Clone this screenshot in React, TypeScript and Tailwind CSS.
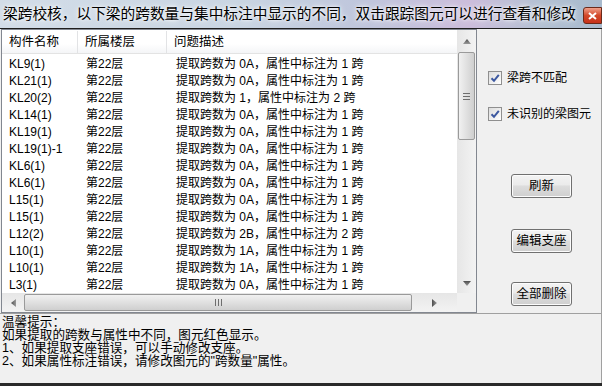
import React from "react";

const rows = [
  ["KL9(1)", "0A", "1"],
  ["KL21(1)", "0A", "1"],
  ["KL20(2)", "1", "2"],
  ["KL14(1)", "0A", "1"],
  ["KL19(1)", "0A", "1"],
  ["KL19(1)-1", "0A", "1"],
  ["KL6(1)", "0A", "1"],
  ["KL6(1)", "0A", "1"],
  ["L15(1)", "0A", "1"],
  ["L15(1)", "0A", "1"],
  ["L12(2)", "2B", "2"],
  ["L10(1)", "1A", "1"],
  ["L10(1)", "1A", "1"],
  ["L3(1)", "0A", "1"],
];

const Arrow = ({ dir }: { dir: "up" | "down" | "left" | "right" }) => {
  const pts = {
    up: "0,5 4,0 8,5",
    down: "0,0 8,0 4,5",
    left: "5,0 5,8 0,4",
    right: "0,0 0,8 5,4",
  }[dir];
  const horiz = dir === "left" || dir === "right";
  return (
    <svg width={horiz ? 5 : 8} height={horiz ? 8 : 5} viewBox={horiz ? "0 0 5 8" : "0 0 8 5"}>
      <defs>
        <linearGradient id={`g-${dir}`} x1="0" y1="0" x2={horiz ? "1" : "0"} y2={horiz ? "0" : "1"}>
          <stop offset="0" stopColor="#4d4d4d" />
          <stop offset="1" stopColor="#9a9a9a" />
        </linearGradient>
      </defs>
      <polygon points={pts} fill={`url(#g-${dir})`} />
    </svg>
  );
};

const Check = () => (
  <div className="flex h-[14px] w-[14px] items-center justify-center border border-[#8f8f8f] bg-[linear-gradient(135deg,#dcdcdc,#ffffff)]">
    <svg width="10" height="10" viewBox="0 0 10 10">
      <path d="M1.5 5.2 L4 7.8 L8.8 1.8" fill="none" stroke="#3c58a0" strokeWidth="2" />
    </svg>
  </div>
);

const Btn = ({ label }: { label: string }) => (
  <button className="flex h-[24px] w-[61px] items-center justify-center rounded-[3px] border border-[#707070] bg-[linear-gradient(#f3f3f3_0%,#ebebeb_45%,#dddddd_50%,#cfcfcf_100%)] text-[12.5px] leading-none text-black shadow-[inset_0_0_0_1px_#fcfcfc]">
    {label}
  </button>
);

export default function App() {
  return (
    <div
      className="flex h-[386px] w-[602px] flex-col overflow-hidden bg-[#f0f0f0] text-black"
      style={{ fontFamily: '"Liberation Sans", "Noto Sans CJK SC", sans-serif' }}
    >
      {/* Title bar */}
      <div className="flex h-[28px] items-start justify-between bg-[linear-gradient(90deg,#d3dde8_0%,#c9d5e2_40%,#bfc6dc_60%,#ccbddb_78%,#b3c1d3_90%,#a8bacd_100%)]">
        <span className="pl-[3px] pt-[4px] text-[14.7px] leading-[20px] [text-shadow:0_0_6px_#ffffff,0_0_3px_#ffffff]">
          梁跨校核，以下梁的跨数量与集中标注中显示的不同，双击跟踪图元可以进行查看和修改
        </span>
        <div className="mt-[7px] flex h-[17px] w-[19px] items-center justify-center rounded-l-[3px] border border-[#6b2a1a] bg-[linear-gradient(#f0a08a,#d2482a_50%,#c7321a)]">
          <svg width="9" height="8" viewBox="0 0 9 8">
            <path d="M1 1 L8 7 M8 1 L1 7" stroke="#ffffff" strokeWidth="2" />
          </svg>
        </div>
      </div>
      <div className="h-px bg-[#1e1e1e]" />

      {/* Main */}
      <div className="flex h-[284px]">
        {/* List view */}
        <div className="ml-[1px] flex w-[476px] flex-col border border-[#828790] bg-white">
          <div className="flex flex-1 overflow-hidden">
            <div className="flex-1 overflow-hidden">
              {/* header */}
              <div className="flex h-[24px] items-center border-b border-[#e3e3e3] bg-[linear-gradient(#ffffff_0%,#ffffff_60%,#f4f5f7_100%)] text-[12.5px]">
                <div className="w-[76px] border-r border-[#e2e3e5] pl-[7px] leading-[22px]">构件名称</div>
                <div className="w-[89px] border-r border-[#e2e3e5] pl-[7px] leading-[22px]">所属楼层</div>
                <div className="flex-1 pl-[7px] leading-[22px]">问题描述</div>
              </div>
              <div className="pt-[2px]">
                {rows.map(([name, a, b], i) => (
                  <div key={i} className="flex h-[17px] items-center text-[12px] leading-[17px]">
                    <div className="w-[77px] pl-[7px]">{name}</div>
                    <div className="w-[89px] pl-[7px]">第22层</div>
                    <div className="flex-1 whitespace-nowrap pl-[8px]">
                      提取跨数为 {a}，属性中标注为 {b} 跨
                    </div>
                  </div>
                ))}
              </div>
            </div>
            {/* vertical scrollbar */}
            <div className="flex w-[19px] flex-col bg-[linear-gradient(90deg,#e6e6e6,#f3f3f3)]">
              <div className="flex h-[22px] items-center justify-center">
                <Arrow dir="up" />
              </div>
              <div className="mx-[1px] flex h-[88px] items-center justify-center rounded-[2px] border border-[#9a9a9a] bg-[linear-gradient(90deg,#f1f1f1,#e0e0e0_50%,#cfcfcf)]">
                <div className="flex flex-col gap-[2px]">
                  <div className="h-px w-[7px] bg-[#6e6e6e]" />
                  <div className="h-px w-[7px] bg-[#6e6e6e]" />
                  <div className="h-px w-[7px] bg-[#6e6e6e]" />
                </div>
              </div>
              <div className="flex-1" />
              <div className="flex h-[20px] items-center justify-center">
                <Arrow dir="down" />
              </div>
            </div>
          </div>
          {/* horizontal scrollbar */}
          <div className="flex h-[19px]">
            <div className="flex flex-1 items-center bg-[linear-gradient(#e6e6e6,#f3f3f3)]">
              <div className="flex w-[22px] justify-center">
                <Arrow dir="left" />
              </div>
              <div className="my-[1px] flex h-[17px] w-[388px] items-center justify-center rounded-[2px] border border-[#9a9a9a] bg-[linear-gradient(#f1f1f1,#e0e0e0_50%,#cfcfcf)]">
                <div className="flex gap-[2px]">
                  <div className="h-[7px] w-px bg-[#6e6e6e]" />
                  <div className="h-[7px] w-px bg-[#6e6e6e]" />
                  <div className="h-[7px] w-px bg-[#6e6e6e]" />
                </div>
              </div>
              <div className="flex flex-1 justify-center">
                <Arrow dir="right" />
              </div>
            </div>
            <div className="w-[19px] bg-[#f0f0f0]" />
          </div>
        </div>

        {/* Right panel */}
        <div className="flex flex-1 flex-col border-r border-[#a0a0a0] pl-[11px] pt-[42px]">
          <div className="flex items-center gap-[5px] text-[12px] leading-[14px]">
            <Check />
            <span>梁跨不匹配</span>
          </div>
          <div className="mt-[22px] flex items-center gap-[5px] text-[12px] leading-[14px]">
            <Check />
            <span>未识别的梁图元</span>
          </div>
          <div className="ml-[23px] mt-[53px] flex flex-col">
            <Btn label="刷新" />
            <div className="h-[31px]" />
            <Btn label="编辑支座" />
            <div className="h-[29px]" />
            <Btn label="全部删除" />
          </div>
        </div>
      </div>
      <div className="h-px bg-[#a0a0a0]" />

      {/* Tips */}
      <div className="flex-1 border-r border-[#a0a0a0] pl-[2px] pt-[2px] text-[12.6px] leading-[13px]">
        <div>温馨提示：</div>
        <div>如果提取的跨数与属性中不同，图元红色显示。</div>
        <div>1、如果提取支座错误，可以手动修改支座。</div>
        <div>2、如果属性标注错误，请修改图元的"跨数量"属性。</div>
      </div>
      <div className="h-[3px] bg-[#2a2a2a]" />
    </div>
  );
}
